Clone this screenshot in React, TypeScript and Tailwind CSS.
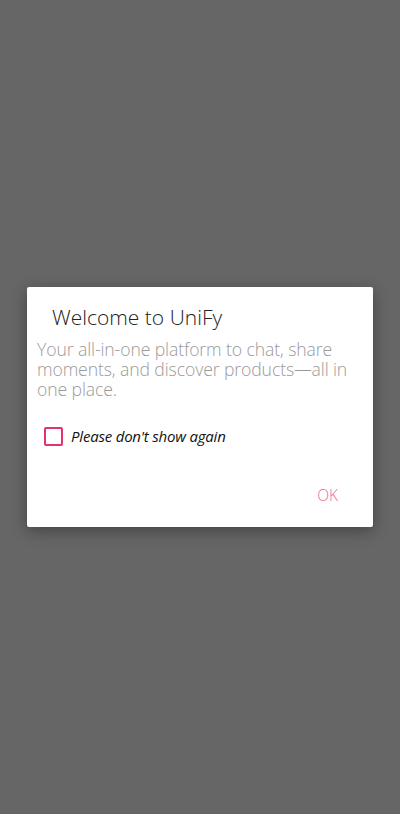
import React, { useState } from "react";

// welcome dialog over dimmed screen
function App() {
  const [dontShow, setDontShow] = useState(false);

  return (
    <div
      className="w-[400px] h-[814px] bg-[#666666] flex flex-col justify-center"
      style={{ fontFamily: '"Open Sans", "Liberation Sans", sans-serif' }}
    >
      <div className="mx-[27px] h-[240px] bg-white rounded-[2px] shadow-[0_4px_16px_rgba(0,0,0,0.35)] flex flex-col">
        <div className="pl-[25px] pt-[16px] h-[52px] text-[21px] leading-[28px] font-light text-[#222222]">
          Welcome to UniFy
        </div>
        <p className="pl-[10px] pr-[14px] text-[17.6px] leading-[20px] font-light text-[#9a9a9a] tracking-[-0.1px]">
          Your all-in-one platform to chat, share moments, and discover
          products—all in one place.
        </p>
        <label className="mt-[26px] ml-[17px] flex items-center gap-[8px] cursor-pointer">
          <input
            type="checkbox"
            checked={dontShow}
            onChange={() => setDontShow(!dontShow)}
            className="appearance-none w-[19px] h-[19px] border-2 border-[#e5326f] rounded-[2px] checked:bg-[#e5326f]"
          />
          <span className="italic text-[15px] text-[#111111] tracking-[-0.2px]">
            Please don't show again
          </span>
        </label>
        <div className="flex justify-end mt-auto pr-[35px] pb-[21px]">
          <button className="text-[15.5px] leading-[22px] text-[#ec6b9b] font-light">
            OK
          </button>
        </div>
      </div>
    </div>
  );
}

export default App;
